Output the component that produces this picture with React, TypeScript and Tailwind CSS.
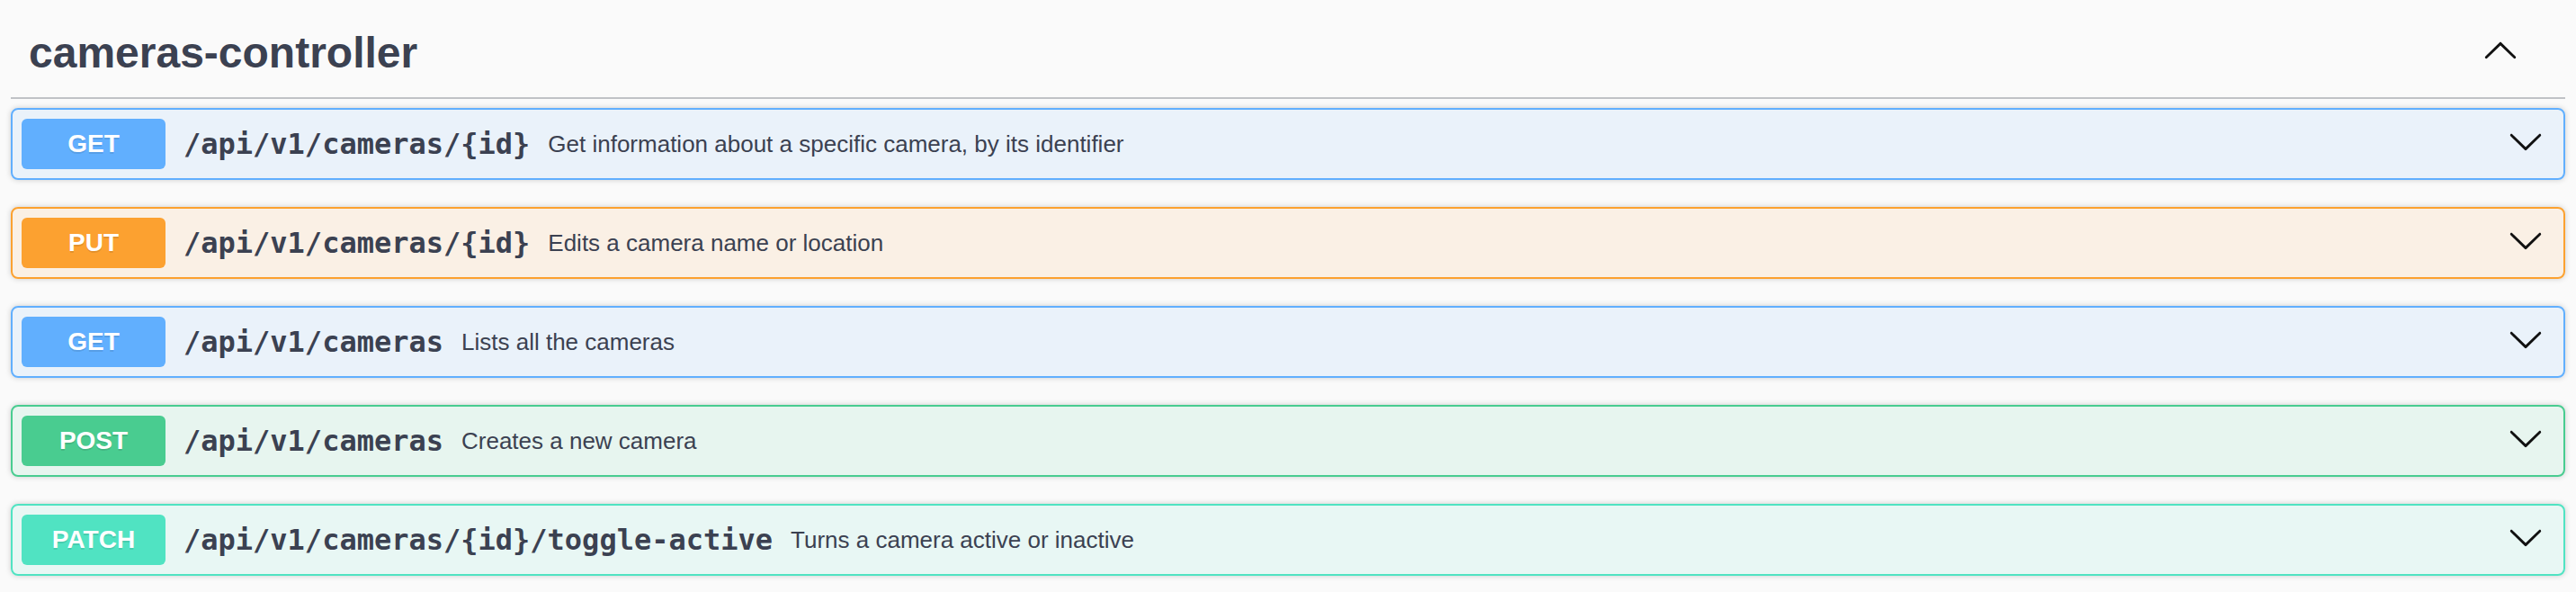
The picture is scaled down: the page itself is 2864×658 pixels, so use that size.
import React from 'react';

type Op = {
  method: string;
  path: string;
  summary: string;
  badge: string;
  block: string;
};

const ops: Op[] = [
  {
    method: 'GET',
    path: '/api/v1/cameras/{id}',
    summary: 'Get information about a specific camera, by its identifier',
    badge: 'bg-[#61affe]',
    block: 'border-[#61affe] bg-[#61affe]/10',
  },
  {
    method: 'PUT',
    path: '/api/v1/cameras/{id}',
    summary: 'Edits a camera name or location',
    badge: 'bg-[#fca130]',
    block: 'border-[#fca130] bg-[#fca130]/10',
  },
  {
    method: 'GET',
    path: '/api/v1/cameras',
    summary: 'Lists all the cameras',
    badge: 'bg-[#61affe]',
    block: 'border-[#61affe] bg-[#61affe]/10',
  },
  {
    method: 'POST',
    path: '/api/v1/cameras',
    summary: 'Creates a new camera',
    badge: 'bg-[#49cc90]',
    block: 'border-[#49cc90] bg-[#49cc90]/10',
  },
  {
    method: 'PATCH',
    path: '/api/v1/cameras/{id}/toggle-active',
    summary: 'Turns a camera active or inactive',
    badge: 'bg-[#50e3c2]',
    block: 'border-[#50e3c2] bg-[#50e3c2]/10',
  },
];

const Arrow: React.FC<{ className?: string }> = ({ className = '' }) => (
  <svg viewBox="0 0 20 20" width={40} height={40} className={className} aria-hidden="true">
    <path
      fill="#111"
      d="M17.418 6.109c.272-.268.709-.268.979 0s.271.701 0 .969l-7.908 7.83c-.27.268-.707.268-.979 0l-7.908-7.83c-.27-.268-.27-.701 0-.969.271-.268.709-.268.979 0L10 13.25l7.418-7.141z"
    />
  </svg>
);

const OpBlock: React.FC<{ op: Op }> = ({ op }) => (
  <div className={`mb-[30px] h-[80px] rounded-[8px] border-2 shadow-[0_0_6px_rgba(0,0,0,0.19)] ${op.block}`}>
    <div className="flex h-full items-center p-[10px]">
      <span
        className={`min-w-[160px] rounded-[6px] py-[12px] text-center font-['Liberation_Sans',Arial,sans-serif] text-[28px] leading-[32px] font-bold text-white [text-shadow:0_2px_0_rgba(0,0,0,0.1)] ${op.badge}`}
      >
        {op.method}
      </span>
      <span className="shrink-0 px-[20px] font-['DejaVu_Sans_Mono',monospace] text-[32px] font-bold">
        {op.path}
      </span>
      <span className="flex-1 font-['Liberation_Sans',Arial,sans-serif] text-[26px]">{op.summary}</span>
      <div className="mr-[12px] mb-[6px] flex items-center">
        <Arrow />
      </div>
    </div>
  </div>
);

export default function App() {
  return (
    <div className="min-h-screen bg-[#fafafa] px-[12px] pt-[10px] text-[#3b4151]">
      {/* tag header */}
      <div className="mb-[10px] flex h-[100px] items-center border-b-2 border-[#3b4151]/30 py-[20px] pr-[52px] pl-[20px]">
        <h3 className="flex-1 font-['Liberation_Sans',Arial,sans-serif] text-[48px] font-bold">cameras-controller</h3>
        <div className="mb-[4px] flex items-center">
          <Arrow className="rotate-180" />
        </div>
      </div>

      {ops.map((op, i) => (
        <OpBlock key={i} op={op} />
      ))}
    </div>
  );
}
